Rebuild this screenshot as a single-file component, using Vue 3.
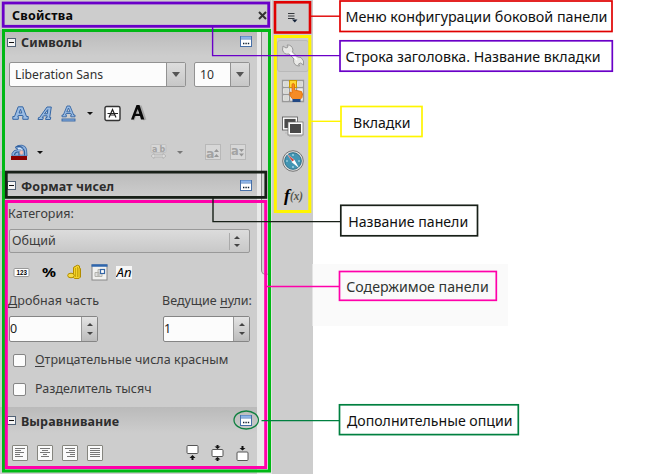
<script setup>
const callouts = [
  { text: 'Меню конфигурации боковой панели', x: 340, y: 1, w: 272, h: 30.5, tx: 345.5, ty: 22, tl: 262, color: '#e00000', ink: '#111', line: 'M311 16.2H340' },
  { text: 'Строка заголовка. Название вкладки', x: 340, y: 40.8, w: 272.3, h: 30.4, tx: 345.5, ty: 62, tl: 255, color: '#6a00c8', ink: '#111', line: 'M212.6 27V55.6H340' },
  { text: 'Вкладки', x: 341, y: 106.5, w: 81, h: 30, tx: 353, ty: 128, tl: 57.5, color: '#fff500', ink: '#111', line: 'M311 121.3H341' },
  { text: 'Название панели', x: 340.8, y: 205.3, w: 136.7, h: 30.5, tx: 348.2, ty: 227, tl: 120, color: '#182018', ink: '#111', line: 'M213 198V221.6H341' },
  { text: 'Содержимое панели', x: 339.5, y: 271.5, w: 156.8, h: 28.8, tx: 346.2, ty: 292, tl: 142.5, color: '#ff00aa', ink: '#303432', line: 'M267 286.5H340' },
  { text: 'Дополнительные опции', x: 339.5, y: 404.8, w: 178.8, h: 29.8, tx: 347, ty: 426, tl: 165.5, color: '#008040', ink: '#111', line: 'M261.5 420.6H340' },
]
const alignments = [
  'M3 3.5h10M3 5.5h6M3 7.5h9M3 9.5h5M3 11.5h8',
  'M3 3.5h10M5 5.5h6M3 7.5h10M6 9.5h4M4 11.5h8',
  'M3 3.5h10M7 5.5h6M4 7.5h9M8 9.5h5M5 11.5h8',
  'M3 3.5h10M3 5.5h10M3 7.5h10M3 9.5h10M3 11.5h10',
]
</script>

<template>
  <div class="page">
    <div class="sidebar">
      <div class="deck">
        <header class="titlebar">
          <span>Свойства</span>
          <svg width="9" height="9" viewBox="0 0 9 9"><path d="M1 1l7 7M8 1L1 8" stroke="#333" stroke-width="2" /></svg>
        </header>
        <div class="scroller">
          <div class="content">
            <section class="chars">
              <div class="head first">
                <i class="toggle"></i><b>Символы</b>
                <svg class="more" width="12" height="11" viewBox="0 0 12 11"><rect x=".5" y=".5" width="11" height="10" fill="#fff" stroke="#4770a8" /><path d="M1 1.5h10" stroke="#8ab4ec" stroke-width="2" /><path d="M1 3h10" stroke="#5382c0" /><path d="M3 7.5h1.4M5.4 7.5h1.4M7.8 7.5h1.4" stroke="#123" stroke-width="1.4" /></svg>
              </div>
              <div class="fonts">
                <div class="combo family"><span>Liberation Sans</span><em><u></u></em></div>
                <div class="combo size"><span>10</span><em><u></u></em></div>
              </div>
              <div class="tools row1">
                <svg width="17" height="17" viewBox="0 0 17 17"><path fill-rule="evenodd" d="M.8 14.3V11.500h1.7L6.200 1.800h4.600L14.500 11.500h1.700v2.800h-5.400V11.500h.4l-.5-1H6.300l-.5 1h.5v2.800zM7.100 8h2.700L8.500 4.200z" fill="#9bbce3" stroke="#3465a4" /></svg>
                <svg width="16" height="17" viewBox="0 0 16 17"><path fill-rule="evenodd" d="M1 14.500l.6-2h1L10 2h4.300l-1.600 10.500h1.100l-.5 2H8.600l.4-2h1l.1-1.700H6.500l-1.200 1.700h1l-.5 2zM7.500 8.800h2.800l.5-4.200z" fill="#9bbce3" stroke="#3465a4" /></svg>
                <svg width="15" height="17" viewBox="0 0 15 17"><path fill-rule="evenodd" d="M1 11.800V10h1.300L6 1h3l3.700 9H14v1.800H9.800V10h.7l-.6-1.500H5.200L4.600 10h.7v1.800zM5.800 6.800h3.300L7.500 3z" fill="#9bbce3" stroke="#3465a4" stroke-width=".9" /><rect x="1" y="14" width="13" height="2" fill="#8db3e2" stroke="#3465a4" stroke-width=".9" /></svg>
                <u class="arrow a1"></u>
                <svg width="17" height="17" viewBox="0 0 17 17"><rect x="1" y="1.500" width="15" height="14" rx="1.500" fill="#fff" stroke="#333" stroke-width="1.400" /><path d="M5 12.500L8.500 4.500 12 12.500M6.200 10h4.500M3.500 8.500h10.500" fill="none" stroke="#222" stroke-width="1.200" /></svg>
                <svg width="18" height="18" viewBox="0 0 18 18"><path d="M3 16L8.500 3h2l4.500 13" fill="none" stroke="#888" stroke-width="3" opacity=".55" /><path fill-rule="evenodd" d="M1 15.500L6.500 1h3l4.800 14.500H11l-1-3.500H5l-1.200 3.500zM5.700 9.800h3.600L7.700 5z" fill="#080808" /></svg>
              </div>
              <div class="tools row2">
                <svg width="17" height="17" viewBox="0 0 17 17"><path d="M1 12V9.500Q2 6 7 5.500L4 3.500Q6 .8 11 1.200q4 .8 4.500 4L16 12z" fill="#8fb2de" stroke="#3a69a6" stroke-width=".9" /><path d="M5 3q5-2 7 1.500M3.500 11q.5-3 3-3h1.500v3.500M12 5q2 1 1.500 6.500" fill="none" stroke="#2f5e9a" stroke-width="1.200" /><path d="M7 4.500q4-.5 4 1.500" fill="none" stroke="#e2edf9" /><ellipse cx="10.500" cy="8.500" rx="1.900" ry="2.300" fill="#f3bcae" stroke="#8b8ca8" stroke-width=".5" /><rect y="12" width="16" height="4" fill="#8a0000" /></svg>
                <u class="arrow a2"></u>
                <svg class="dim sp" width="17" height="16" viewBox="0 0 17 16"><rect x="1" y=".5" width="15" height="8" rx="1" fill="#d7d7d7" stroke="#c1c1c1" /><text x="2" y="7.500">a</text><text x="9.500" y="7.500">b</text><path d="M1 12l3-2.500V11h9V9.500l3 2.500-3 2.500V13H4v1.500z" fill="#ddd" stroke="#aaa" stroke-width=".7" /></svg>
                <u class="arrow a3"></u>
                <svg class="dim up" width="16" height="17" viewBox="0 0 16 17"><rect x=".5" y=".5" width="15" height="15" fill="#d7d7d7" stroke="#b8b8b8" /><text x="1" y="13.500" font-size="12.500">a</text><path d="M9 8l2.500-3L14 8zM9 13l2.500-3 2.500 3z" fill="#979797" /></svg>
                <svg class="dim dn" width="16" height="17" viewBox="0 0 16 17"><rect x=".5" y=".5" width="15" height="15" fill="#d7d7d7" stroke="#b8b8b8" /><text x="1" y="10.500" font-size="11.500">a</text><path d="M9 5h5l-2.500 3zM9 9.500h5l-2.500 3z" fill="#979797" /></svg>
              </div>
            </section>
            <section class="numbers">
              <div class="head second-head">
                <i class="toggle"></i><b>Формат чисел</b>
                <svg class="more" width="12" height="11" viewBox="0 0 12 11"><rect x=".5" y=".5" width="11" height="10" fill="#fff" stroke="#4770a8" /><path d="M1 1.5h10" stroke="#8ab4ec" stroke-width="2" /><path d="M1 3h10" stroke="#5382c0" /><path d="M3 7.5h1.4M5.4 7.5h1.4M7.8 7.5h1.4" stroke="#123" stroke-width="1.4" /></svg>
              </div>
              <div class="label cat">Категория:</div>
              <div class="select"><span>Общий</span><em class="steps"><u class="t-up"></u><u></u></em></div>
              <div class="formats">
                <svg width="17" height="17" viewBox="0 0 17 17"><rect x="1" y="4.500" width="15" height="8" rx="1" fill="#fff" stroke="#999" /><text x="3.500" y="11" textLength="10.500" lengthAdjust="spacingAndGlyphs" font-size="7" font-weight="700" font-family="Liberation Sans">123</text></svg>
                <svg width="15" height="17" viewBox="0 0 15 17"><text x="0" y="13" textLength="14" lengthAdjust="spacingAndGlyphs" font-size="13" font-weight="700" font-family="Noto Sans">%</text></svg>
                <svg width="15" height="17" viewBox="0 0 15 17"><path d="M6.500 4q0-1.500 2-1.500V2q2-1.500 4 0v2q1 0 1 1v8q-1 2-3.500 1.500-3 .5-3.500-1z" fill="#f5d42e" stroke="#b18b00" /><path d="M8.500 4v9M10.500 3v10M12 4v9" stroke="#b99600" stroke-width=".7" /><ellipse cx="4" cy="11.500" rx="3.300" ry="2.300" fill="#f7dc45" stroke="#b18b00" /></svg>
                <svg width="17" height="17" viewBox="0 0 17 17"><rect x="1" y="1" width="15" height="15" fill="#f1f1ef" stroke="#888" /><path d="M.5 1.500h16" stroke="#2e66ae" stroke-width="2.500" /><path d="M4 8.500h4v4H4zM7 5.500h4v7H7z" fill="#dedede" stroke="#b3b3ad" /><rect x="9.500" y="5.500" width="4" height="4" fill="#fff" stroke="#3465a4" stroke-width="1.200" /></svg>
                <svg width="17" height="17" viewBox="0 0 17 17"><rect y="2" width="16" height="13" fill="#f6f6f6" /><text x=".5" y="12.500" textLength="15" lengthAdjust="spacingAndGlyphs" font-size="12.500" font-style="italic" font-family="Noto Sans">An</text></svg>
              </div>
              <div class="spins">
                <div class="left"><div class="label"><s>Д</s>робная часть</div><div class="spin"><span>0</span><em><u class="t-up"></u><u></u></em></div></div>
                <div class="right"><div class="label">Ведущие <s>н</s>ули:</div><div class="spin"><span>1</span><em><u class="t-up"></u><u></u></em></div></div>
              </div>
              <div class="check"><i></i><span><s>О</s>трицательные числа красным</span></div>
              <div class="check second"><i></i><span>Разделитель тысяч</span></div>
            </section>
            <section>
              <div class="head">
                <i class="toggle"></i><b>Выравнивание</b>
                <svg class="more" width="12" height="11" viewBox="0 0 12 11"><rect x=".5" y=".5" width="11" height="10" fill="#fff" stroke="#4770a8" /><path d="M1 1.5h10" stroke="#8ab4ec" stroke-width="2" /><path d="M1 3h10" stroke="#5382c0" /><path d="M3 7.5h1.4M5.4 7.5h1.4M7.8 7.5h1.4" stroke="#123" stroke-width="1.4" /></svg>
              </div>
              <div class="aligns">
                <svg v-for="d in alignments" :key="d" width="16" height="16" viewBox="0 0 16 16"><rect x=".5" y=".5" width="15" height="15" rx=".5" fill="#fafafa" stroke="#85857f" /><path :d="d" stroke="#777" /></svg>
                <svg class="va" width="13" height="16" viewBox="0 0 13 16"><rect x="1" y=".5" width="11" height="8" rx="1" fill="#fff" stroke="#555" /><path d="M6.500 10l3 3h-2v2h-2v-2h-2z" fill="#111" /></svg>
                <svg class="vb" width="13" height="16" viewBox="0 0 13 16"><rect x="1" y="4.500" width="11" height="7" rx="1" fill="#fff" stroke="#555" /><path d="M6.500 4L3.500 1.500h2V0h2v1.500h2zM6.500 12l3 2.500h-2V16h-2v-1.500h-2z" fill="#111" /></svg>
                <svg class="vb" width="13" height="16" viewBox="0 0 13 16"><rect x="1" y="7" width="11" height="8.500" rx="1" fill="#fff" stroke="#555" /><path d="M6.500 5.500L3.500 3h2V1h2v2h2z" fill="#111" /></svg>
              </div>
            </section>
          </div>
          <div class="scrollbar"><div class="thumb"></div></div>
        </div>
      </div>
      <nav class="tabs">
        <div class="config"><svg width="12" height="12" viewBox="0 0 12 12"><path d="M1 1.500h6.500M1 4h6.500M1 6.500h6.500" stroke="#34383c" /><path d="M5 7.500h5.500L7.800 10.500z" fill="#122138" /></svg></div>
        <div class="tab active"><svg width="24" height="24" viewBox="0 0 24 24"><path d="M2 2l3 2 2-1-1-2q5-.5 6 5l-.5 2 5 5q4-1 6 4v4l-3-2-2 1 1 2q-6 0-6-6l.5-1-5-5Q3 11 1.500 6z" fill="#e9e9e7" stroke="#999" stroke-linejoin="round" /><path d="M9 8l7 8" stroke="#fff" stroke-width="1.500" /></svg></div>
        <div class="tab"><svg width="24" height="24" viewBox="0 0 24 24"><path d="M1.500 1.500h21v21h-21z" fill="#eee" stroke="#999" stroke-width="1.300" /><path d="M8.500 1v22M15.500 1v22M1 8.500h22M1 15.500h22" stroke="#999" stroke-width="1.300" /><path d="M3 3h4v4H3zM17 3h4v4h-4zM3 10h4v4H3zM3 17h4v4H3z" fill="#d9dad5" /><rect x="8.500" y="1.500" width="7" height="7" fill="#ffd735" stroke="#c99c00" /><path d="M11 14V6q0-1.500 1.200-1.500T13.500 6v5l7 1.500q1.500 2 .5 6l-2 2h-7l-3-4v-3.500z" fill="#f58b25" stroke="#dd6a00" stroke-width=".8" /><path d="M11.500 20h8v3h-8z" fill="#224884" /></svg></div>
        <div class="tab"><svg width="24" height="24" viewBox="0 0 24 24"><rect x="2.500" y="4" width="13" height="11" fill="#4b4b4b" stroke="#fff" stroke-width="1.800" /><rect x="1.500" y="3" width="15" height="13" fill="none" stroke="#555" stroke-width=".8" /><rect x="8" y="9" width="13" height="11" fill="#494949" stroke="#fff" stroke-width="2" /><rect x="7" y="8" width="15" height="13" fill="none" stroke="#666" stroke-width=".7" /><path d="M4 19h3M8 22.500h13" stroke="#aaa" opacity=".6" /></svg></div>
        <div class="tab"><svg width="24" height="24" viewBox="0 0 24 24"><circle cx="12" cy="12" r="10.300" fill="#ddd" stroke="#777" /><circle cx="12" cy="12" r="8.300" fill="#4295b3" stroke="#2d6f88" /><path d="M12 5v2M12 17v2M5 12h2M17 12h2" stroke="#b8e1ed" stroke-width="1.200" /><path d="M6 5l7.500 6-2 2z" fill="#d44239" stroke="#fff" stroke-width=".4" /><path d="M18 19l-7.500-6 3-2z" fill="#fff" /></svg></div>
        <div class="tab"><svg width="24" height="24" viewBox="0 0 24 24" font-family="Liberation Sans" font-style="italic" font-weight="700"><text x="3" y="16.500" font-size="17" textLength="6" lengthAdjust="spacingAndGlyphs" font-family="Liberation Serif">f</text><text x="9" y="15.500" font-size="12" fill="#55554a" textLength="13" lengthAdjust="spacingAndGlyphs" font-family="Liberation Serif">(x)</text></svg></div>
      </nav>
    </div>
    <svg class="notes" width="647" height="474" viewBox="0 0 647 474" fill="none">
      <rect x="312.500" y="264" width="195.500" height="62" fill="#fafafa" />
      <rect x="3.200" y="3" width="265.500" height="23.300" stroke="#6a00c8" stroke-width="2.800" />
      <rect x="3.500" y="30.500" width="266" height="440.500" stroke="#00b815" stroke-width="3" />
      <rect x="6.300" y="201.500" width="259.400" height="266" stroke="#ff00aa" stroke-width="3" />
      <rect x="6.300" y="172.100" width="259.500" height="25.300" stroke="#182018" stroke-width="2.800" />
      <rect x="275" y="2.300" width="35" height="30.200" stroke="#e00000" stroke-width="2.600" />
      <rect x="275.300" y="36.500" width="34.500" height="175" stroke="#fff500" stroke-width="3" />
      <ellipse cx="246.200" cy="420" rx="12.200" ry="9" stroke="#108040" stroke-width="1.300" />
      <g v-for="c in callouts" :key="c.text">
        <path :d="c.line" :stroke="c.color" stroke-width="1.400" />
        <rect :x="c.x" :y="c.y" :width="c.w" :height="c.h" :stroke="c.color" stroke-width="1.700" />
        <text :x="c.tx" :y="c.ty" :textLength="c.tl" lengthAdjust="spacingAndGlyphs" :fill="c.ink">{{ c.text }}</text>
      </g>
    </svg>
  </div>
</template>

<style>
body { background: #fff; }
</style>
<style scoped>
.page { position: relative; width: 647px; height: 474px; overflow: hidden; font: 12.5px/16px "Noto Sans", sans-serif; color: #3c3c3c; }
.page * { box-sizing: border-box; }
svg { display: block; flex: none; }
.sidebar { display: flex; width: 313px; height: 474px; background: #cdcdcd; }
.deck { width: 272px; border-right: 1px solid #e2e2e2; }
.titlebar { display: flex; align-items: center; justify-content: space-between; height: 29px; padding: 2px 4px 0 12px; font-weight: 700; color: #080808; letter-spacing: .2px; }
.scroller { display: flex; height: 445px; }
.content { width: 257px; }
.chars { height: 142px; padding-top: 1px; }
.numbers { height: 236px; }
.head { display: flex; align-items: center; height: 26px; padding: 3px 5px 0 7px; background: linear-gradient(#bababa, #cdcdcd); color: #2d2d2d; }
.first { padding-top: 0; }
.second-head { padding-top: 5px; }
.head b { margin-left: 5px; white-space: nowrap; letter-spacing: .08px; }
.more { margin-left: auto; margin-bottom: 3px; }
.toggle { display: flex; align-items: center; width: 9px; height: 9px; border: 1px solid #516276; background: #f4f4f4; padding: 0 1px; margin-bottom: 2px; }
.toggle::before { content: ""; width: 5px; height: 1px; background: #111; }
.fonts { display: flex; gap: 8px; padding: 6px 0 0 9px; }
.combo { display: flex; height: 25px; border: 1px solid #929292; border-radius: 2px; background: #fcfcfc; color: #303030; font-size: 12.2px; }
.combo span { flex: 1; padding: 4px 5px; white-space: nowrap; }
.family { width: 177px; }
.size { width: 56px; }
.combo em { display: flex; align-items: center; justify-content: center; width: 19px; border-left: 1px solid #929292; background: linear-gradient(#ddd, #c7c7c7); }
.combo u, .arrow { border: 4px solid transparent; border-top: 5px solid #555; border-bottom: 0; }
.tools { display: flex; align-items: center; height: 18px; }
.row1 { margin-top: 17px; padding-left: 12px; }
.row1 svg:nth-child(2) { margin-left: 8px; }
.row1 svg:nth-child(3) { margin-left: 8px; }
.row1 svg:nth-child(5) { margin-left: 11px; }
.row1 svg:nth-child(6) { margin-left: 9px; }
.row1 .arrow, .row2 .arrow { border-width: 3px 3px 0; }
.row1 .arrow { border-top-color: #111; }
.a1 { margin-left: 11px; }
.row2 { margin-top: 21px; padding-left: 11px; }
.a2 { margin-left: 9px; border-top-color: #111; }
.a3 { margin-left: 10px; border-top-color: #777; }
.sp { margin-left: 107px; }
.up { margin-left: 22px; }
.dn { margin-left: 9px; }
.dim text { font-family: "DejaVu Sans", sans-serif; font-weight: 700; fill: #a3a3a3; }
.sp text { font-size: 8px; }
.label { white-space: nowrap; height: 16px; }
s { text-decoration: underline; text-underline-offset: 2px; }
.cat { margin: 9px 0 0 8px; }
.select { display: flex; align-items: center; justify-content: space-between; width: 241px; height: 24px; margin: 7px 0 0 9px; padding: 0 5px 0 2px; border: 1px solid #999; border-radius: 2px; background: linear-gradient(#dcdcdc, #c8c8c8); }
.steps { display: flex; flex-direction: column; align-items: center; justify-content: center; gap: 5px; width: 15px; height: 17px; border-left: 1px solid #aaa; }
.t-up { transform: rotate(180deg); }
.steps u, .spin u { border: 3px solid transparent; border-top-color: #444; border-bottom: 0; }
.formats { display: flex; align-items: center; gap: 10px; margin: 11px 0 0 13px; color: #000; }
.formats svg:nth-child(1) { margin-right: 2px; }
.formats svg:nth-child(3) { margin-right: -1px; }
.formats svg:nth-child(4) { margin-right: -2px; }
.spins { display: flex; padding: 12px 0 0 8px; }
.left { width: 154px; }
.left .label { letter-spacing: .1px; }
.spin { display: flex; width: 89px; height: 26px; margin: 7px 0 0 1px; border: 1px solid #858585; border-radius: 2px; background: #fcfcfc; color: #222; }
.right .spin { width: 87px; }
.spin span { flex: 1; padding: 4px 0; }
.spin em { display: flex; flex-direction: column; align-items: center; justify-content: center; gap: 6px; width: 16px; border-left: 1px solid #999; background: linear-gradient(#e3e3e3, #bcbcbc); }
.check { display: flex; align-items: center; height: 16px; margin-top: 10px; padding-left: 13px; gap: 9px; white-space: nowrap; letter-spacing: .05px; }
.check i { width: 13px; height: 13px; border: 1px solid #858585; border-radius: 2px; background: #fcfcfc; }
.second { margin-top: 13px; }
.aligns { display: flex; gap: 9px; padding: 12px 0 0 12px; }
.va { margin-left: 74px; }
.vb { margin-left: 3px; }
.scrollbar { width: 14px; background: #e9e9e9; padding-left: 4px; }
.thumb { height: 246px; background: #d6d6d6; border: 1px solid #898989; border-top: 0; border-radius: 0 0 5px 5px; }
.tabs { width: 41px; display: flex; flex-direction: column; align-items: center; }
.config { height: 40px; padding-top: 12px; }
.tab { width: 32px; height: 32px; margin-bottom: 3px; display: flex; align-items: center; justify-content: center; border: 1px solid transparent; border-radius: 3px; }
.active { border-color: #b9b9b9; background: #c9c9c9; }
.notes { position: absolute; left: 0; top: 0; }
.notes text { font-size: 15px; }
</style>
